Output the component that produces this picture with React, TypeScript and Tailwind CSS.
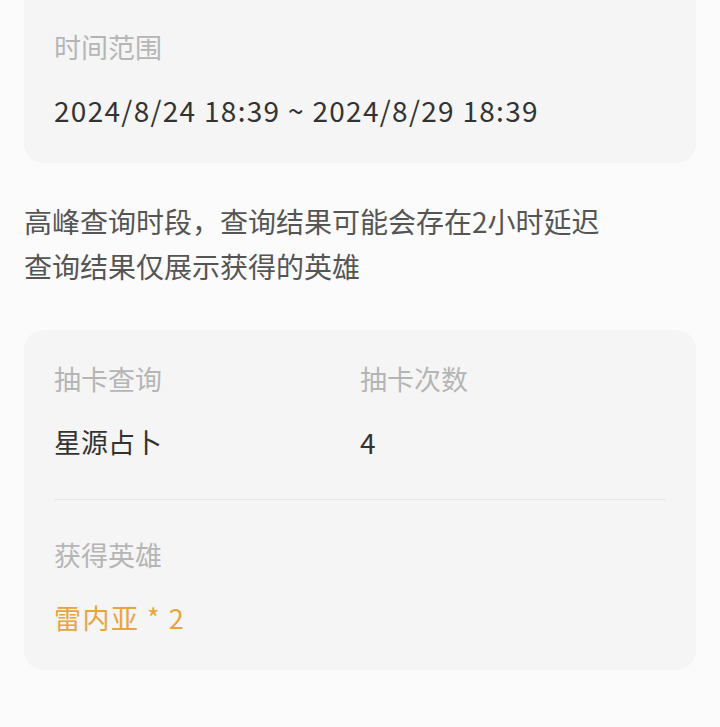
import React from "react";

const font = { fontFamily: '"Noto Sans CJK SC", "Noto Sans", sans-serif' };

function Field({ label, value, valueClass }: { label: string; value: string; valueClass?: string }) {
  return (
    <div className="flex flex-col gap-[27px]">
      <div className="text-[27px] leading-[36px] text-[#b5b5b5]">{label}</div>
      <div className={valueClass ?? "text-[27px] leading-[36px] text-[#333333]"}>{value}</div>
    </div>
  );
}

export default function App() {
  return (
    <div className="min-h-[727px] overflow-hidden bg-[#fbfbfb] px-6" style={font}>
      <div className="-mt-[30px] rounded-[20px] bg-[#f5f5f5] px-[30px] pt-[59px] pb-[35px]">
        <Field
          label="时间范围"
          value="2024/8/24 18:39 ~ 2024/8/29 18:39"
          valueClass="text-[28px] leading-[36px] tracking-[1.3px] text-[#333333]"
        />
      </div>

      <div className="mt-[36px] text-[28px] leading-[45px] text-[#555555]">
        <p>高峰查询时段，查询结果可能会存在2小时延迟</p>
        <p>查询结果仅展示获得的英雄</p>
      </div>

      <div className="mt-[41px] rounded-[20px] bg-[#f5f5f5] px-[30px] pt-[31px] pb-[34px]">
        <div className="grid grid-cols-2 pb-[39px]">
          <Field label="抽卡查询" value="星源占卜" />
          <Field label="抽卡次数" value="4" valueClass="text-[28px] leading-[36px] text-[#333333]" />
        </div>
        <div className="h-px bg-[#e9e9e9]" />
        <div className="pt-[37px]">
          <Field
            label="获得英雄"
            value="雷内亚 * 2"
            valueClass="text-[27px] leading-[36px] tracking-[1.5px] text-[#e9a43c]"
          />
        </div>
      </div>
    </div>
  );
}
